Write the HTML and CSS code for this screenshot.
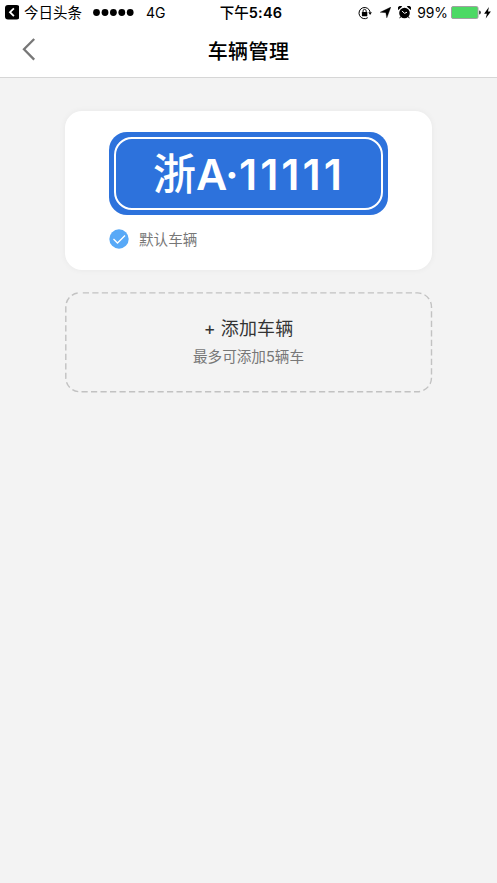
FILE: index.html
```html
<!DOCTYPE html>
<html lang="zh-CN">
<head>
<meta charset="utf-8">
<title>车辆管理</title>
<link rel="stylesheet" href="styles.css">
</head>
<body>
<header class="header">
  <div class="status">
    <div class="status-left">
      <svg class="return-icon" width="14" height="15" viewBox="0 0 14 15"><rect width="14.5" height="14.5" rx="3"/><path d="M8.9 3.3 5 7.2l3.9 3.9" fill="none" stroke="#fff" stroke-width="1.8"/></svg>
      <span class="return-app">今日头条</span>
      <svg class="signal" width="41" height="7" viewBox="0 0 41 7"><circle cx="3.5" cy="3.5" r="3.4"/><circle cx="12" cy="3.5" r="3.4"/><circle cx="20.4" cy="3.5" r="3.4"/><circle cx="28.8" cy="3.5" r="3.4"/><circle cx="37.2" cy="3.5" r="3.4"/></svg>
      <span class="network">4G</span>
    </div>
    <div class="time">下午<span class="clock">5:46</span></div>
    <div class="status-right">
      <svg class="lock" width="14" height="14" viewBox="0 0 14 14"><path d="M9.8 11.7A5.6 5.6 0 1 1 12.1 6" fill="none" stroke="#000" stroke-width="1"/><path d="m10.3 6.2 3.6 0-1.8 2.8z"/><rect x="3.9" y="6.1" width="5.4" height="4.1" rx=".4"/><path d="M5 6.4V5a1.6 1.6 0 0 1 3.2 0v1.4" fill="none" stroke="#000" stroke-width=".9"/></svg>
      <svg class="location" width="11" height="11" viewBox="0 0 11 11"><path d="M10.9.1 6.8 10.9 5.8 5.7.1 5.3z" stroke="#000" stroke-width=".3"/></svg>
      <svg class="alarm" width="13" height="13" viewBox="0 0 13 13"><circle cx="6.5" cy="7" r="5.3"/><path d="M.3 4A2.6 2.6 0 0 1 4.2.6zM12.7 4A2.6 2.6 0 0 0 8.8.6z"/><path d="M2.9 10.4 1.7 12.2M10.1 10.4l1.2 1.8" stroke="#000"/><path d="M4 4.9l2.5 2.5L9 6.2" fill="none" stroke="#fff" stroke-width="1"/></svg>
      <span class="percent">99%</span>
      <svg class="battery" width="30" height="13" viewBox="0 0 30 13"><rect x=".5" y=".5" width="26.5" height="12" rx="1.5" fill="#4cd964" stroke="#a1a1a1"/><path d="M28.3 4.5q1.4 0 1.4 2t-1.4 2z"/></svg>
      <svg class="bolt" width="7" height="12" viewBox="0 0 7 12"><path d="M4.9 0 .1 6.7h2.8L1.7 11.5 6.9 4.6H4z"/></svg>
    </div>
  </div>
  <div class="nav">
    <svg class="back" width="14" height="24" viewBox="0 0 14 24"><path d="M12.2 1 2 11.3l10.2 10.3" fill="none" stroke="#777" stroke-width="2.3"/></svg>
    <h1 class="title">车辆管理</h1>
  </div>
</header>
<main class="content">
  <section class="card">
    <div class="plate"><div class="plate-frame"><span class="province">浙</span><span class="letter">A·</span><span class="digits">11111</span></div></div>
    <div class="default">
      <svg width="20" height="20" viewBox="0 0 20 20"><circle cx="10" cy="10" r="9.7" fill="#58a9f7"/><path d="m4.5 10 4 4L16 6.5" fill="none" stroke="#fff" stroke-width="1.3"/></svg>
      <span class="default-text">默认车辆</span>
    </div>
  </section>
  <section class="add">
    <svg class="add-outline" width="368" height="101" viewBox="0 0 368 101"><rect x=".8" y=".9" width="365.7" height="98.8" rx="14" fill="none" stroke="#c2c2c2" stroke-width="1.4" stroke-dasharray="6.2 3.3" stroke-dashoffset="-3"/></svg>
    <div class="add-title">+ 添加车辆</div>
    <div class="add-note">最多可添加5辆车</div>
  </section>
</main>
</body>
</html>
```
FILE: styles.css
```css
* { box-sizing: border-box; }
body { margin: 0; min-height: 883px; background: #f3f3f3; color: #000; font-family: Inter, "Noto Sans CJK SC", sans-serif; }
svg { display: block; flex: none; }
.header { height: 78px; background: #fff; border-bottom: 1px solid #d6d6d6; }
.status { display: grid; grid-template-columns: 1fr auto 1fr; height: 25px; align-items: center; padding: 0 6px 0 5px; font-size: 14.5px; line-height: 24px; white-space: nowrap; }
.status-left, .status-right { display: flex; align-items: center; }
.status-right { justify-content: flex-end; }
.return-app { margin-left: 5px; }
.signal { margin-left: 11px; }
.network { margin-left: 12px; font-size: 14px; }
.time { padding-left: 6px; font-weight: 500; }
.clock { font-weight: 600; letter-spacing: .2px; }
.location { margin-left: 8px; }
.alarm { margin-left: 7px; }
.percent { margin-left: 6px; font-size: 13.9px; }
.battery { margin-left: 3px; }
.bolt { margin-left: 3px; }
.nav { display: grid; grid-template-columns: 1fr auto 1fr; align-items: center; height: 52px; padding: 0 14px 0 22px; }
.back { margin-top: -2px; }
.title { margin: 1px 0 0; font-size: 20px; font-weight: 500; line-height: 30px; letter-spacing: .4px; transform: translateX(-4px); }
.content { padding: 33px 65px 0 65px; }
.card { height: 159px; padding: 21px 44px 0; border-radius: 17px; background: #fff; box-shadow: 0 0 6px rgba(0,0,0,.05); }
.plate { width: 279px; height: 83px; padding: 5px; border-radius: 18px; background: #2d72dc; }
.plate-frame { display: flex; align-items: center; height: 73px; padding: 0 0 0 37px; border: 2px solid #fff; border-radius: 18px; color: #fff; font-size: 43px; font-weight: 600; line-height: 66px; }
.province { width: 43px; margin-top: 1px; font-weight: 500; }
.letter { letter-spacing: -.8px; }
.digits { margin-left: 1px; letter-spacing: 3px; }
.default { display: flex; align-items: center; height: 20px; margin-top: 14px; color: #777; font-size: 14.6px; }
.default-text { margin: -2px 0 0 10px; }
.add { position: relative; height: 101px; margin-top: 22px; padding-top: 23px; text-align: center; }
.add-outline { position: absolute; inset: 0; }
.add-title { color: #333; font-size: 18px; line-height: 28px; letter-spacing: .1px; }
.add-note { margin-top: 3px; color: #777; font-size: 14.6px; line-height: 22px; }
```
